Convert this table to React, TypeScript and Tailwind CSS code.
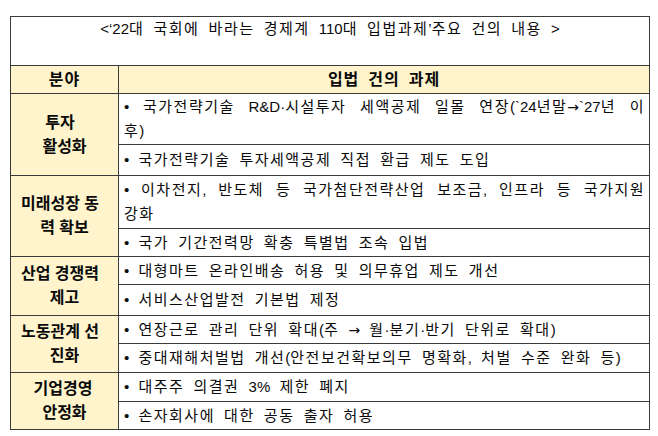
import React from "react";

const FONT = { fontFamily: '"Liberation Sans", "Noto Sans CJK KR", sans-serif' };

type Item = { lines: string[]; h: number };
type Group = { label: string[]; shift: boolean; items: Item[] };

const groups: Group[] = [
  {
    label: ["투자", "활성화"],
    shift: true,
    items: [
      { lines: ["• 국가전략기술 R&D·시설투자 세액공제 일몰 연장(`24년말→`27년 이", "후)"], h: 51 },
      { lines: ["• 국가전략기술 투자세액공제 직접 환급 제도 도입"], h: 31 },
    ],
  },
  {
    label: ["미래성장 동", "력 확보"],
    shift: true,
    items: [
      { lines: ["• 이차전지, 반도체 등 국가첨단전략산업 보조금, 인프라 등 국가지원", "강화"], h: 53 },
      { lines: ["• 국가 기간전력망 확충 특별법 조속 입법"], h: 28 },
    ],
  },
  {
    label: ["산업 경쟁력", "제고"],
    shift: true,
    items: [
      { lines: ["• 대형마트 온라인배송 허용 및 의무휴업 제도 개선"], h: 28 },
      { lines: ["• 서비스산업발전 기본법 제정"], h: 31 },
    ],
  },
  {
    label: ["노동관계 선", "진화"],
    shift: true,
    items: [
      { lines: ["• 연장근로 관리 단위 확대(주 → 월·분기·반기 단위로 확대)"], h: 28 },
      { lines: ["• 중대재해처벌법 개선(안전보건확보의무 명확화, 처벌 수준 완화 등)"], h: 29 },
    ],
  },
  {
    label: ["기업경영", "안정화"],
    shift: false,
    items: [
      { lines: ["• 대주주 의결권 3% 제한 폐지"], h: 29 },
      { lines: ["• 손자회사에 대한 공동 출자 허용"], h: 28 },
    ],
  },
];

const isWide = (c: string) => /[\u1100-\u11FF\u3130-\u318F\uAC00-\uD7AF\s]/.test(c);

function Txt({ s }: { s: string }) {
  const parts: { wide: boolean; t: string }[] = [];
  for (const c of Array.from(s)) {
    const w = isWide(c);
    const last = parts[parts.length - 1];
    if (last && last.wide === w) last.t += c;
    else parts.push({ wide: w, t: c });
  }
  return (
    <>
      {parts.map((p, i) => {
        if (p.wide) return <span key={i}>{p.t}</span>;
        const sub = p.t.split("→");
        return (
          <span key={i} className="tracking-normal">
            {sub.map((x, j) => (
              <React.Fragment key={j}>
                {j > 0 && <span style={{ fontFamily: '"DejaVu Sans", sans-serif' }} className="text-[14px]">→</span>}
                {x}
              </React.Fragment>
            ))}
          </span>
        );
      })}
    </>
  );
}

export default function App() {
  return (
    <div className="w-[658px] h-[436px] bg-white pt-[16px] pl-[10px]" style={FONT}>
      <table className="w-[640px] table-fixed border-collapse text-[15px] leading-[24px] text-[#0a0a0a]">
        <colgroup>
          <col className="w-[108px]" />
          <col />
        </colgroup>
        <tbody>
          <tr className="h-[49px]">
            <td
              colSpan={2}
              className="border border-[#3a3a3a] align-top text-center p-0 tracking-[1.5px] [word-spacing:3.5px]"
            >
              <Txt s="<‘22대 국회에 바라는 경제계 110대 입법과제’주요 건의 내용 >" />
            </td>
          </tr>
          <tr className="h-[28px] bg-[#fff4cc]">
            <td className="border border-[#3a3a3a] text-center font-bold text-[16px] p-0 tracking-[1px]">분야</td>
            <td className="border border-[#3a3a3a] text-center font-bold text-[16px] p-0 tracking-[1px] [word-spacing:3.5px]">
              입법 건의 과제
            </td>
          </tr>
          {groups.map((g, gi) =>
            g.items.map((it, ii) => (
              <tr key={`${gi}-${ii}`} style={{ height: it.h }}>
                {ii === 0 && (
                  <td
                    rowSpan={g.items.length}
                    className="border border-[#3a3a3a] bg-[#fff4cc] text-center font-bold text-[16px] leading-[24px] p-0 align-middle"
                  >
                    <div className={g.shift ? "pr-[9px]" : "pr-[3px]"}>{g.label[0]}</div>
                    <div>{g.label[1]}</div>
                  </td>
                )}
                <td className="border border-[#3a3a3a] pl-[5px] pr-[4px] py-0 align-middle whitespace-pre tracking-[1.5px] [word-spacing:3.5px]">
                  {it.lines.length > 1 ? (
                    <>
                      <div className="text-justify [text-align-last:justify]">
                        <Txt s={it.lines[0]} />
                      </div>
                      <div>
                        <Txt s={it.lines[1]} />
                      </div>
                    </>
                  ) : (
                    <div>
                      <Txt s={it.lines[0]} />
                    </div>
                  )}
                </td>
              </tr>
            ))
          )}
        </tbody>
      </table>
    </div>
  );
}
